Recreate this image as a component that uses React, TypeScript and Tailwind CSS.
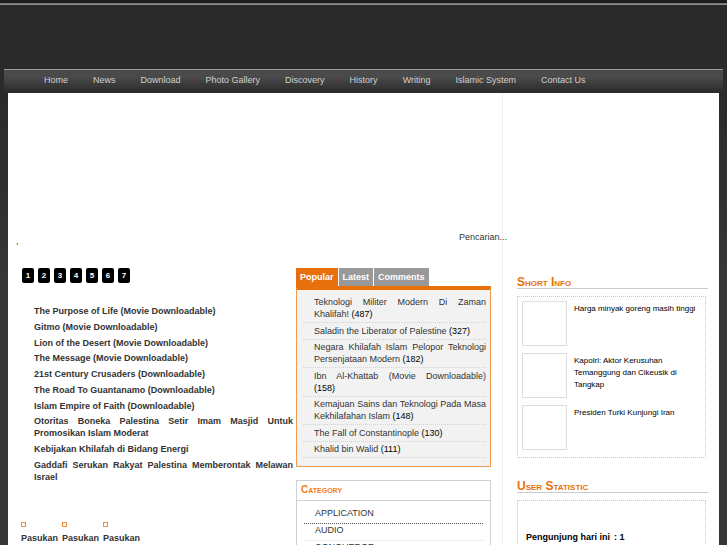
import React, { useState } from 'react';

const MENU = [
  'Home',
  'News',
  'Download',
  'Photo Gallery',
  'Discovery',
  'History',
  'Writing',
  'Islamic System',
  'Contact Us',
];

const PAGES = [1, 2, 3, 4, 5, 6, 7];

const HEADLINES = [
  'The Purpose of Life (Movie Downloadable)',
  'Gitmo (Movie Downloadable)',
  'Lion of the Desert (Movie Downloadable)',
  'The Message (Movie Downloadable)',
  '21st Century Crusaders (Downloadable)',
  'The Road To Guantanamo (Downloadable)',
  'Islam Empire of Faith (Downloadable)',
  'Otoritas Boneka Palestina Setir Imam Masjid Untuk Promosikan Islam Moderat',
  'Kebijakan Khilafah di Bidang Energi',
  'Gaddafi Serukan Rakyat Palestina Memberontak Melawan Israel',
];

type PopularItem = {
  title: string;
  count: number;
};

const POPULAR: PopularItem[] = [
  { title: 'Teknologi Militer Modern Di Zaman Khalifah!', count: 487 },
  { title: 'Saladin the Liberator of Palestine', count: 327 },
  { title: 'Negara Khilafah Islam Pelopor Teknologi Persenjataan Modern', count: 182 },
  { title: 'Ibn Al-Khattab (Movie Downloadable)', count: 158 },
  { title: 'Kemajuan Sains dan Teknologi Pada Masa Kekhilafahan Islam', count: 148 },
  { title: 'The Fall of Constantinople', count: 130 },
  { title: 'Khalid bin Walid', count: 111 },
];

const TABS = ['Popular', 'Latest', 'Comments'];
const CATEGORIES = ['APPLICATION', 'AUDIO', 'CONQUEROR'];
const SHORT_INFO = [
  'Harga minyak goreng masih tinggi',
  'Kapolri: Aktor Kerusuhan Temanggung dan Cikeusik di Tangkap',
  'Presiden Turki Kunjungi Iran',
];

const App = () => {
  return (
    <div className="h-screen overflow-hidden flex flex-col bg-[#2a2a2a] font-['Liberation_Sans',Arial,sans-serif] text-[9px] leading-3 text-[#333]">
      <header>
        <div className="h-1 bg-[#1e1e1e] border-b border-[#777]" />
        <div className="h-[65px] border-t border-[#8c8c8c]" />
      </header>
      <nav className="mx-1 h-6 border-t border-[#999] bg-linear-to-b from-[#4a4a4a] from-30% to-[#2a2a2a]">
        <ul className="flex gap-[25px] pl-10 pt-1 text-[#d0d0d0]">
          {MENU.map((item) => (
            <li key={item}>
              <a href="#" className="whitespace-nowrap">
                {item}
              </a>
            </li>
          ))}
        </ul>
      </nav>
      <div className="flex-1 min-h-0 px-2 bg-linear-to-b from-[#2a2a2a] to-[#363636] to-40%">
        <main className="relative min-h-full bg-white">
          <div className="absolute inset-y-0 right-[216px] border-l border-dotted border-[#e4e4e4]" />
          <SearchRow />
          <div className="flex">
            <div className="flex-1 min-w-0 pl-[13px] pr-[3px]">
              <Headlines />
            </div>
            <div className="w-[195px]">
              <PopularTabs />
              <Category />
            </div>
            <aside className="w-[228px] pl-[26px] pr-[11px] pt-[7px]">
              <ShortInfo />
              <UserStatistic />
            </aside>
          </div>
        </main>
      </div>
    </div>
  );
};

const SearchRow = () => (
  <div className="relative h-[175px] pt-[138px] pl-2">
    <form className="flex justify-end pr-[199px]">
      <input
        type="text"
        aria-label="Pencarian"
        defaultValue="Pencarian..."
        className="w-[61px] h-3 bg-transparent outline-none"
      />
    </form>
    <span className="block leading-none -mt-1.5">,</span>
  </div>
);

const Headlines = () => (
  <section>
    <div className="flex gap-1 pl-px">
      {PAGES.map((page) => (
        <button
          key={page}
          type="button"
          className="w-3 h-[15px] rounded-xs bg-black text-white text-[8px] font-bold leading-none"
        >
          {page}
        </button>
      ))}
    </div>
    <ul className="mt-[22px] pl-[13px] flex flex-col justify-between min-h-[178px] font-bold text-justify">
      {HEADLINES.map((title) => (
        <li key={title}>
          <a href="#">{title}</a>
        </li>
      ))}
    </ul>
    <ul className="mt-[39px] flex gap-1 font-bold">
      {[0, 1, 2].map((i) => (
        <li key={i}>
          <span className="block mb-[5px] w-[5px] h-[5px] border border-[#f09038]" />
          <a href="#">Pasukan</a>
        </li>
      ))}
    </ul>
  </section>
);

const PopularTabs = () => {
  const [active, setActive] = useState('Popular');

  return (
    <section>
      <div className="flex gap-px">
        {TABS.map((tab) => (
          <button
            key={tab}
            type="button"
            onClick={() => setActive(tab)}
            className={`h-[18px] px-1 font-bold text-white ${tab === active ? 'bg-[#e8700c]' : 'bg-[#999]'}`}
          >
            {tab}
          </button>
        ))}
      </div>
      <div className="border border-t-4 border-[#f09a50] border-t-[#e8700c] bg-[#f2f2f2] pt-[6px] pb-2 pl-1.5 pr-1">
        <ul className="flex flex-col justify-between min-h-[162px]">
          {POPULAR.map(({ title, count }) => (
            <li key={title} className="pl-[11px] pb-[2px] border-b border-dotted border-[#d4d4d4] text-justify">
              <a href="#">
                {title} <span className="text-black">{`(${count})`}</span>
              </a>
            </li>
          ))}
        </ul>
      </div>
    </section>
  );
};

const Category = () => (
  <section className="mt-[13px] border border-[#d0d0d0]">
    <h2 className="h-5 pl-1 leading-[18px] border-b border-[#d0d0d0] text-[10px] font-bold text-[#f07d1a] [font-variant:small-caps]">
      Category
    </h2>
    <ul className="px-[7px] pt-1.5">
      {CATEGORIES.map((name) => (
        <li
          key={name}
          className="pl-[11px] pb-1 border-b border-dotted border-[#ddd] first:border-[#555]"
        >
          <a href="#">{name}</a>
        </li>
      ))}
    </ul>
  </section>
);

const SideTitle = ({ children }: { children: React.ReactNode }) => (
  <h2 className="h-[14px] leading-[14px] border-b border-[#ccc] text-[12px] font-bold text-[#e8700c] [font-variant:small-caps]">
    {children}
  </h2>
);

const ShortInfo = () => (
  <section>
    <SideTitle>Short Info</SideTitle>
    <ul className="mt-[7px] mr-[2px] border border-dotted border-[#c8c8c8] pl-1 pt-1 pb-[7px] flex flex-col gap-[7px] text-[8px] text-black">
      {SHORT_INFO.map((text) => (
        <li key={text} className="flex gap-[7px]">
          <span className="shrink-0 w-[45px] h-[45px] border border-[#ddd]" />
          <a href="#" className="pt-[2px]">
            {text}
          </a>
        </li>
      ))}
    </ul>
  </section>
);

const UserStatistic = () => (
  <section className="mt-[21px]">
    <SideTitle>User Statistic</SideTitle>
    <div className="mt-[7px] mr-[2px] border border-dotted border-[#c8c8c8] px-2 pt-[30px] pb-8 font-bold text-black">
      <span className="mr-1">Pengunjung hari ini</span>
      <span>: 1</span>
    </div>
  </section>
);

export default App;
